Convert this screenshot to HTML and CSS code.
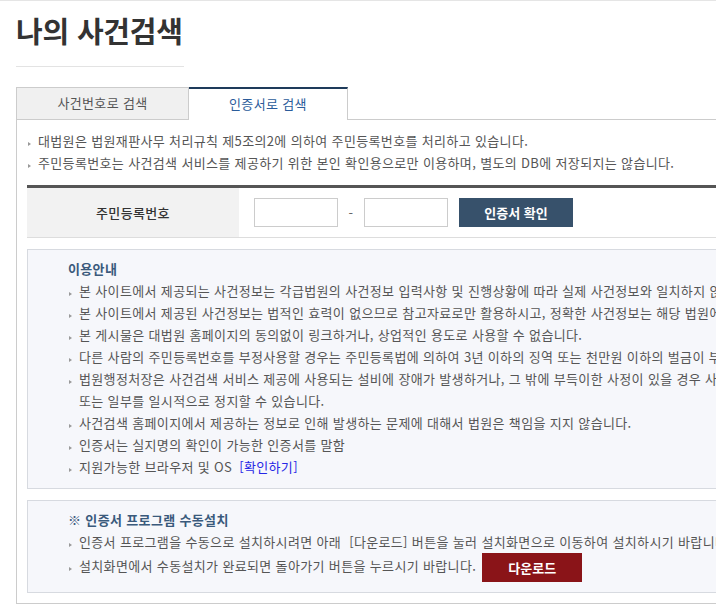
FILE: index.html
```html
<!DOCTYPE html>
<html lang="ko">
<head>
    <meta charset="UTF-8">
    <title>나의 사건검색</title>
    <link rel="stylesheet" href="styles.css">
</head>
<body>
    <div class="page">
        <h1 class="page-title">나의 사건검색</h1>

        <div class="tabs">
            <a class="tab">사건번호로 검색</a>
            <a class="tab active">인증서로 검색</a>
        </div>

        <div class="tab-panel">
            <ul class="bullets">
                <li>대법원은 법원재판사무 처리규칙 제5조의2에 의하여 주민등록번호를 처리하고 있습니다.</li>
                <li>주민등록번호는 사건검색 서비스를 제공하기 위한 본인 확인용으로만 이용하며, 별도의 DB에 저장되지는 않습니다.</li>
            </ul>

            <table class="form-table">
                <tr>
                    <th>주민등록번호</th>
                    <td>
                        <div class="jumin-field">
                            <input type="text" class="jumin" maxlength="6">
                            <span class="dash">-</span>
                            <input type="password" class="jumin" maxlength="7">
                            <button class="btn btn-navy">인증서 확인</button>
                        </div>
                    </td>
                </tr>
            </table>

            <div class="guide-box">
                <h3>이용안내</h3>
                <ul class="bullets">
                    <li>본 사이트에서 제공되는 사건정보는 각급법원의 사건정보 입력사항 및 진행상황에 따라 실제 사건정보와 일치하지 않을 수 있습니다.</li>
                    <li>본 사이트에서 제공된 사건정보는 법적인 효력이 없으므로 참고자료로만 활용하시고, 정확한 사건정보는 해당 법원에 문의하시기 바랍니다.</li>
                    <li>본 게시물은 대법원 홈페이지의 동의없이 링크하거나, 상업적인 용도로 사용할 수 없습니다.</li>
                    <li>다른 사람의 주민등록번호를 부정사용할 경우는 주민등록법에 의하여 3년 이하의 징역 또는 천만원 이하의 벌금이 부과됩니다.</li>
                    <li>법원행정처장은 사건검색 서비스 제공에 사용되는 설비에 장애가 발생하거나, 그 밖에 부득이한 사정이 있을 경우 사건검색 서비스의 전부<br>또는 일부를 일시적으로 정지할 수 있습니다.</li>
                    <li>사건검색 홈페이지에서 제공하는 정보로 인해 발생하는 문제에 대해서 법원은 책임을 지지 않습니다.</li>
                    <li>인증서는 실지명의 확인이 가능한 인증서를 말함</li>
                    <li>지원가능한 브라우저 및 OS <a href="#" class="link">[확인하기]</a></li>
                </ul>
            </div>

            <div class="guide-box">
                <h3>※ 인증서 프로그램 수동설치</h3>
                <ul class="bullets">
                    <li>인증서 프로그램을 수동으로 설치하시려면 아래 &nbsp;[다운로드] 버튼을 눌러 설치화면으로 이동하여 설치하시기 바랍니다.</li>
                    <li>설치화면에서 수동설치가 완료되면 돌아가기 버튼을 누르시기 바랍니다. <button class="btn btn-red">다운로드</button></li>
                </ul>
            </div>
        </div>
    </div>
</body>
</html>
```

FILE: styles.css
```css
html {
    overflow: hidden;
}

body {
    margin: 0;
    border-top: 1px solid #e5e5e5;
    font-family: "Noto Sans CJK KR", "Noto Sans", sans-serif;
    font-size: 13px;
    letter-spacing: 0.35px;
    color: #555;
    background-color: #fff;
}

.page {
    width: 1000px;
    padding: 0 16px;
}

.page-title {
    display: inline-block;
    width: 168px;
    margin: 9px 0 0;
    padding-bottom: 16px;
    border-bottom: 1px solid #e3e3e3;
    font-size: 29px;
    line-height: 40px;
    font-weight: 700;
    letter-spacing: -0.2px;
    color: #333;
}

/* tabs */
.tabs {
    display: flex;
    align-items: flex-start;
    margin-top: 20px;
    border-bottom: 1px solid #ccc;
}

.tab {
    box-sizing: border-box;
    width: 173px;
    height: 32px;
    line-height: 30px;
    text-align: center;
    border: 1px solid #ccc;
    border-bottom: none;
    background-color: #f0f0f0;
    color: #555;
    cursor: pointer;
}

.tab.active {
    width: 159px;
    height: 33px;
    margin-bottom: -1px;
    border-left: none;
    border-top: 2px solid #1e3b5b;
    background-color: #fff;
    color: #2b5c9a;
}

.tab-panel {
    padding: 10px 0 10px 10px;
    border-left: 1px solid #ccc;
    border-bottom: 1px solid #ccc;
}

/* bullet lists */
.bullets {
    margin: 0;
    padding: 0;
    list-style: none;
}

.bullets li {
    line-height: 22px;
    padding-left: 11px;
    text-indent: -11px;
}

.bullets li::before {
    content: "";
    display: inline-block;
    text-indent: 0;
    width: 0;
    height: 0;
    margin: 0 7px 0 1px;
    border-left: 3px solid #999;
    border-top: 2.5px solid transparent;
    border-bottom: 2.5px solid transparent;
    vertical-align: 0;
}

.link {
    margin-left: 3px;
    color: #2626e6;
    text-decoration: none;
}

/* form */
.form-table {
    width: 100%;
    margin-top: 11px;
    border-collapse: collapse;
    border-top: 3px solid #555;
}

.form-table th {
    width: 212px;
    height: 49px;
    padding: 0;
    background-color: #f2f2f2;
    border-bottom: 1px solid #ddd;
    font-weight: 500;
    color: #333;
}

.form-table td {
    padding: 0 0 0 15px;
    border-bottom: 1px solid #ddd;
}

.jumin-field {
    display: flex;
    align-items: center;
}

.jumin {
    box-sizing: border-box;
    width: 84px;
    height: 29px;
    margin: 0;
    border: 1px solid #ccc;
}

.dash {
    width: 26px;
    text-align: center;
    color: #666;
}

.btn {
    box-sizing: border-box;
    height: 29px;
    padding: 0;
    border: none;
    font-family: inherit;
    font-size: 13px;
    font-weight: 700;
    letter-spacing: 0;
    color: #fff;
    cursor: pointer;
}

.btn-navy {
    width: 114px;
    margin-left: 11px;
    background-color: #37516b;
}

.btn-red {
    width: 100px;
    margin-left: 2px;
    background-color: #8a1418;
    text-indent: 0;
    vertical-align: middle;
}

/* guide boxes */
.guide-box {
    margin: 11px 0 0;
    padding: 8px 40px 10px;
    border: 1px solid #d7dae0;
    background-color: #f6f7fb;
}

.guide-box h3 {
    margin: 0;
    font-size: 13px;
    line-height: 22px;
    font-weight: 700;
    color: #3a5a7c;
}
```
